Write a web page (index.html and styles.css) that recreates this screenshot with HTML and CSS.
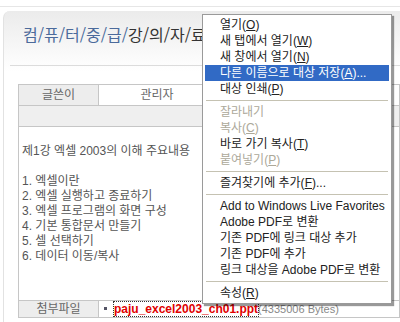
FILE: index.html
```html
<!DOCTYPE html>
<html lang="ko">
<head>
    <meta charset="UTF-8">
    <meta name="viewport" content="width=device-width, initial-scale=1.0">
    <title>컴퓨터중급 강의자료실</title>
    <link rel="stylesheet" href="styles.css">
</head>
<body>
    <div class="top-line"></div>
    <div class="panel">
        <h1 class="board-title"><span class="path">컴/퓨/터/중/급/</span>강/의/자/료</h1>
        <div class="rule"></div>
        <table class="board">
            <tr class="info-row">
                <th>글쓴이</th>
                <td class="writer">관리자</td>
                <td></td>
            </tr>
            <tr class="subject-row">
                <td colspan="3"></td>
            </tr>
            <tr class="content-row">
                <td colspan="3">
                    <p>제1강 엑셀 2003의 이해 주요내용</p>
                    <p>&nbsp;</p>
                    <p>1. 엑셀이란</p>
                    <p>2. 엑셀 실행하고 종료하기</p>
                    <p>3. 엑셀 프로그램의 화면 구성</p>
                    <p>4. 기본 통합문서 만들기</p>
                    <p>5. 셀 선택하기</p>
                    <p>6. 데이터 이동/복사</p>
                </td>
            </tr>
            <tr class="file-row">
                <th>첨부파일</th>
                <td colspan="2" class="file">
                    <span class="bullet"></span><a href="#" class="file-link">paju_excel2003_ch01.ppt</a><span class="file-size">(4335006 Bytes)</span>
                </td>
            </tr>
        </table>
    </div>

    <!-- right click menu over the file link -->
    <ul class="ctx-menu">
        <li>열기(<u>O</u>)</li>
        <li>새 탭에서 열기(<u>W</u>)</li>
        <li>새 창에서 열기(<u>N</u>)</li>
        <li class="active">다른 이름으로 대상 저장(<u>A</u>)...</li>
        <li>대상 인쇄(<u>P</u>)</li>
        <li class="sep"></li>
        <li class="disabled">잘라내기</li>
        <li class="disabled">복사(<u>C</u>)</li>
        <li>바로 가기 복사(<u>T</u>)</li>
        <li class="disabled">붙여넣기(<u>P</u>)</li>
        <li class="sep"></li>
        <li>즐겨찾기에 추가(<u>F</u>)...</li>
        <li class="sep"></li>
        <li>Add to Windows Live Favorites</li>
        <li>Adobe PDF로 변환</li>
        <li>기존 PDF에 링크 대상 추가</li>
        <li>기존 PDF에 추가</li>
        <li>링크 대상을 Adobe PDF로 변환</li>
        <li class="sep"></li>
        <li>속성(<u>R</u>)</li>
    </ul>
</body>
</html>
```

FILE: styles.css
```css
html, body {
    height: 322px;
}
body {
    margin: 0;
    background-color: white;
    font-family: "Liberation Sans", "Noto Sans CJK KR", sans-serif;
    font-size: 12px;
    color: #555;
    overflow: hidden;
}
.top-line {
    margin-top: 6px;
    height: 1px;
    background-color: #e6e6e6;
}
.panel {
    margin: 4px 0 0 3px;
    padding: 12px 0 0 6px;
    height: 299px;
    border-left: 1px solid #e2e2e2;
    border-top-left-radius: 7px;
    background: linear-gradient(#ebebeb, #ffffff 60px);
}
.board-title {
    margin: 0;
    padding-left: 13px;
    font-family: "Noto Sans CJK KR", sans-serif;
    font-size: 16px;
    font-weight: normal;
    line-height: 22px;
    color: #333;
    white-space: nowrap;
}
.board-title .path {
    color: #4b6a9b;
}
.rule {
    margin-top: 20px;
    height: 1px;
    background-color: #dcdcdc;
}
.board {
    margin: 18px 0 0 8px;
    width: 382px;
    border-collapse: collapse;
    border: 1px solid #c6c6c6;
}
.board th,
.board td {
    padding: 0;
    border: 1px solid #c6c6c6;
    line-height: 20px;
    font-weight: normal;
    text-align: center;
    color: #666;
}
.board th {
    width: 79px;
    background-color: #ededed;
}
.board .writer {
    width: 116px;
}
.subject-row td {
    height: 20px;
    background-color: #efefef;
}
.board .content-row td {
    height: 156px;
    padding: 17px 3px 0;
    vertical-align: top;
    text-align: left;
    color: #555;
}
.content-row p {
    margin: 0;
    line-height: 15px;
}
.board .file-row th,
.board .file-row td {
    line-height: 16px;
}
.board .file {
    text-align: left;
    padding-left: 5px;
    white-space: nowrap;
}
.bullet {
    display: inline-block;
    width: 3px;
    height: 3px;
    margin: 0 7px 2px 0;
    background-color: #556;
    vertical-align: middle;
}
.file-link {
    color: #e00000;
    font-weight: bold;
    text-decoration: none;
    outline: 1px dotted #333;
}
.file-size {
    color: #888;
    font-size: 11px;
}
.ctx-menu {
    position: absolute;
    left: 202px;
    top: 14px;
    width: 190px;
    margin: 0;
    padding: 2px;
    list-style: none;
    box-sizing: border-box;
    background-color: white;
    border: 1px solid #9a9a9a;
    box-shadow: 2px 2px 1px rgba(0, 0, 0, 0.4);
    font-family: "Liberation Sans", "Noto Sans CJK KR", sans-serif;
    font-size: 12px;
    color: #222;
}
.ctx-menu li {
    height: 16px;
    line-height: 16px;
    padding-left: 15px;
    white-space: nowrap;
}
.ctx-menu li.active {
    background-color: #316ac5;
    color: white;
}
.ctx-menu li.disabled {
    color: #aca899;
}
.ctx-menu li.sep {
    height: 0;
    margin: 3px 1px 3px 1px;
    padding: 0;
    border-top: 1px solid #c5c2b2;
}
```
